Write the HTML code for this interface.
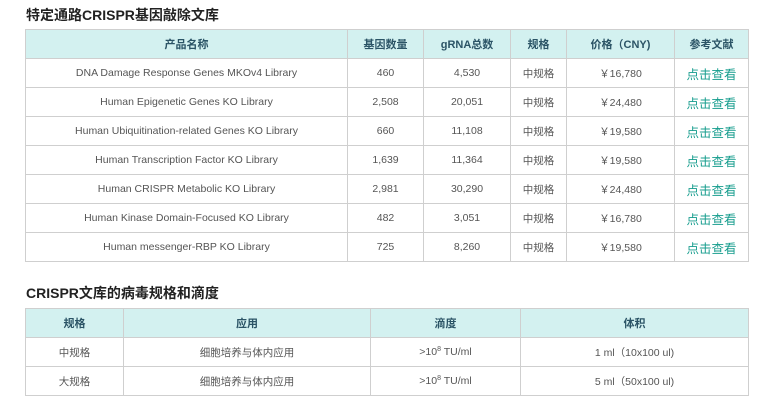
<!DOCTYPE html>
<html><head><meta charset="utf-8"><style>
body{margin:0;background:#fff;font-family:"Liberation Sans","Noto Sans CJK SC",sans-serif;width:766px;height:409px;overflow:hidden;position:relative}
h2{position:absolute;left:26px;margin:0;font-size:14px;font-weight:bold;color:#222;line-height:16px}
table{position:absolute;left:25px;border-collapse:collapse;table-layout:fixed;font-size:10.5px;color:#555}
td,th{border:1px solid #cfcfcf;text-align:center;padding:0;white-space:nowrap;overflow:hidden}
th{background:#d3f1f0;color:#2b5466;font-weight:bold;font-size:11px}
a{color:#179d8e;text-decoration:none;font-size:12.5px}
sup{font-size:7px;vertical-align:4px;line-height:0}
</style></head><body>
<h2 style="top:7px">特定通路CRISPR基因敲除文库</h2>
<table style="top:29px;width:723px">
<colgroup><col style="width:322px"><col style="width:76px"><col style="width:87px"><col style="width:56px"><col style="width:108px"><col style="width:74px"></colgroup>
<tr style="height:29px"><th>产品名称</th><th>基因数量</th><th>gRNA总数</th><th>规格</th><th>价格（CNY)</th><th>参考文献</th></tr>
<tr style="height:29px"><td>DNA Damage Response Genes MKOv4 Library</td><td>460</td><td>4,530</td><td>中规格</td><td>￥16,780</td><td><a>点击查看</a></td></tr>
<tr style="height:29px"><td>Human Epigenetic Genes KO Library</td><td>2,508</td><td>20,051</td><td>中规格</td><td>￥24,480</td><td><a>点击查看</a></td></tr>
<tr style="height:29px"><td>Human Ubiquitination-related Genes KO Library</td><td>660</td><td>11,108</td><td>中规格</td><td>￥19,580</td><td><a>点击查看</a></td></tr>
<tr style="height:29px"><td>Human Transcription Factor KO Library</td><td>1,639</td><td>11,364</td><td>中规格</td><td>￥19,580</td><td><a>点击查看</a></td></tr>
<tr style="height:29px"><td>Human CRISPR Metabolic KO Library</td><td>2,981</td><td>30,290</td><td>中规格</td><td>￥24,480</td><td><a>点击查看</a></td></tr>
<tr style="height:29px"><td>Human Kinase Domain-Focused KO Library</td><td>482</td><td>3,051</td><td>中规格</td><td>￥16,780</td><td><a>点击查看</a></td></tr>
<tr style="height:29px"><td>Human messenger-RBP KO Library</td><td>725</td><td>8,260</td><td>中规格</td><td>￥19,580</td><td><a>点击查看</a></td></tr>
</table>
<h2 style="top:285px">CRISPR文库的病毒规格和滴度</h2>
<table style="top:308px;width:723px">
<colgroup><col style="width:98px"><col style="width:247px"><col style="width:150px"><col style="width:228px"></colgroup>
<tr style="height:29px"><th>规格</th><th>应用</th><th>滴度</th><th>体积</th></tr>
<tr style="height:29px"><td>中规格</td><td>细胞培养与体内应用</td><td>&gt;10<sup>8</sup> TU/ml</td><td>1 ml（10x100 ul)</td></tr>
<tr style="height:29px"><td>大规格</td><td>细胞培养与体内应用</td><td>&gt;10<sup>8</sup> TU/ml</td><td>5 ml（50x100 ul)</td></tr>
</table>
</body></html>
